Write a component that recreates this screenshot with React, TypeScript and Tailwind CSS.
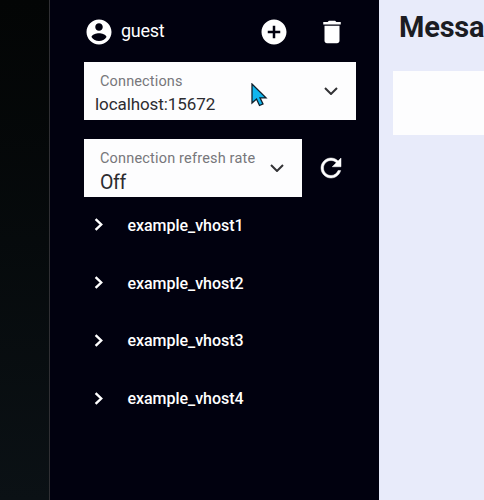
import React from "react";

const paths = {
  account:
    "M12 2C6.48 2 2 6.48 2 12s4.48 10 10 10 10-4.48 10-10S17.52 2 12 2zm0 3c1.66 0 3 1.34 3 3s-1.34 3-3 3-3-1.34-3-3 1.34-3 3-3zm0 14.2c-2.5 0-4.71-1.28-6-3.22.03-1.99 4-3.08 6-3.08 1.99 0 5.97 1.09 6 3.08-1.29 1.94-3.5 3.22-6 3.22z",
  add: "M12 2C6.48 2 2 6.48 2 12s4.48 10 10 10 10-4.48 10-10S17.52 2 12 2zm5 11h-4v4h-2v-4H7v-2h4V7h2v4h4v2z",
  trash: "M6 19c0 1.1.9 2 2 2h8c1.1 0 2-.9 2-2V7H6v12zM19 4h-3.5l-1-1h-5l-1 1H5v2h14V4z",
  refresh:
    "M17.65 6.35C16.2 4.9 14.21 4 12 4c-4.42 0-7.99 3.58-7.99 8s3.57 8 7.99 8c3.73 0 6.84-2.55 7.73-6h-2.08c-.82 2.33-3.04 4-5.65 4-3.31 0-6-2.69-6-6s2.69-6 6-6c1.66 0 3.14.69 4.22 1.78L13 11h7V4l-2.35 2.35z",
};

function Icon({ d, bold = false }: { d: string; bold?: boolean }) {
  return (
    <svg
      viewBox="0 0 24 24"
      className={`h-[30px] w-[30px] shrink-0 fill-white ${bold ? "stroke-white stroke-[0.4]" : ""}`}
    >
      <path d={d} />
    </svg>
  );
}

function ChevronDown() {
  return (
    <svg viewBox="0 0 14 8" className="h-2 w-3.5 shrink-0 fill-none stroke-[#333336] stroke-2">
      <path d="M1 1l6 6 6-6" />
    </svg>
  );
}

function VhostRow({ name }: { name: string }) {
  return (
    <li className="flex h-[57.8px] items-center pl-2.5">
      <svg viewBox="0 0 9 13" className="h-[13px] w-[9px] fill-none stroke-white stroke-[2.4]">
        <path d="M1.6 1.2l5.6 5.3-5.6 5.3" />
      </svg>
      <span className="ml-[24.5px] pt-0.5 text-[16px] leading-5 font-medium tracking-[-0.04px]">{name}</span>
    </li>
  );
}

export default function App() {
  return (
    <div className="flex h-[500px] w-[484px] overflow-hidden bg-[#e8ebfa] font-['Roboto',sans-serif]">
      <div className="w-[50px] shrink-0 border-r border-[#303034] bg-linear-to-b from-[#030505] to-[#0b1115]" />
      <aside className="w-[329px] shrink-0 bg-[#01010f] pl-[34px] text-white">
        <header className="flex h-[62px] items-center pt-0.5">
          <div className="-ml-[0.5px] flex w-[175px] items-center">
            <Icon d={paths.account} />
            <span className="ml-[7.5px] pb-0.5 text-[18px] leading-6 tracking-[-0.25px]">guest</span>
          </div>
          <Icon d={paths.add} />
          <div className="ml-7">
            <Icon d={paths.trash} />
          </div>
        </header>
        <div className="relative flex h-[58px] w-[272px] items-center justify-between bg-[#fdfdfe] pr-[18px] text-[#2c2c30]">
          <div className="pt-[5px]">
            <div className="pl-4 text-[14.5px] leading-5 tracking-[0.14px] text-[#77777b]">Connections</div>
            <div className="pl-[11px] text-[17px] leading-6 tracking-[-0.08px]">localhost:15672</div>
          </div>
          <ChevronDown />
          <svg viewBox="0 0 17 24" className="absolute top-[21px] left-[167px] h-6 w-[17px] fill-[#10b6ee] stroke-[#10202c] stroke-[1.3]">
            <path d="M1 1v19l4.5-4 3 6.5 3.5-1.6-3-6h6z" />
          </svg>
        </div>
        <div className="mt-[19px] flex items-center">
          <div className="flex h-[58px] w-[218px] items-center justify-between bg-[#fdfdfe] pr-[18px] text-[#2c2c30]">
            <div className="pt-2 pl-4">
              <div className="text-[14.5px] leading-5 tracking-[0.18px] whitespace-nowrap text-[#77777b]">Connection refresh rate</div>
              <div className="mt-0.5 text-[19.5px] leading-6 tracking-[-0.3px]">Off</div>
            </div>
            <ChevronDown />
          </div>
          <div className="ml-3.5">
            <Icon d={paths.refresh} bold />
          </div>
        </div>
        <ul className="-mt-px">
          <VhostRow name="example_vhost1" />
          <VhostRow name="example_vhost2" />
          <VhostRow name="example_vhost3" />
          <VhostRow name="example_vhost4" />
        </ul>
      </aside>
      <main className="min-w-0 flex-1 pl-3.5">
        <h1 className="flex h-[71px] items-start pt-[11px] pl-[6px] text-[29px] leading-8 font-bold tracking-[-0.2px] text-[#1b1c22]">Messa</h1>
        <div className="h-[64px] bg-[#fdfdfe]" />
      </main>
    </div>
  );
}
